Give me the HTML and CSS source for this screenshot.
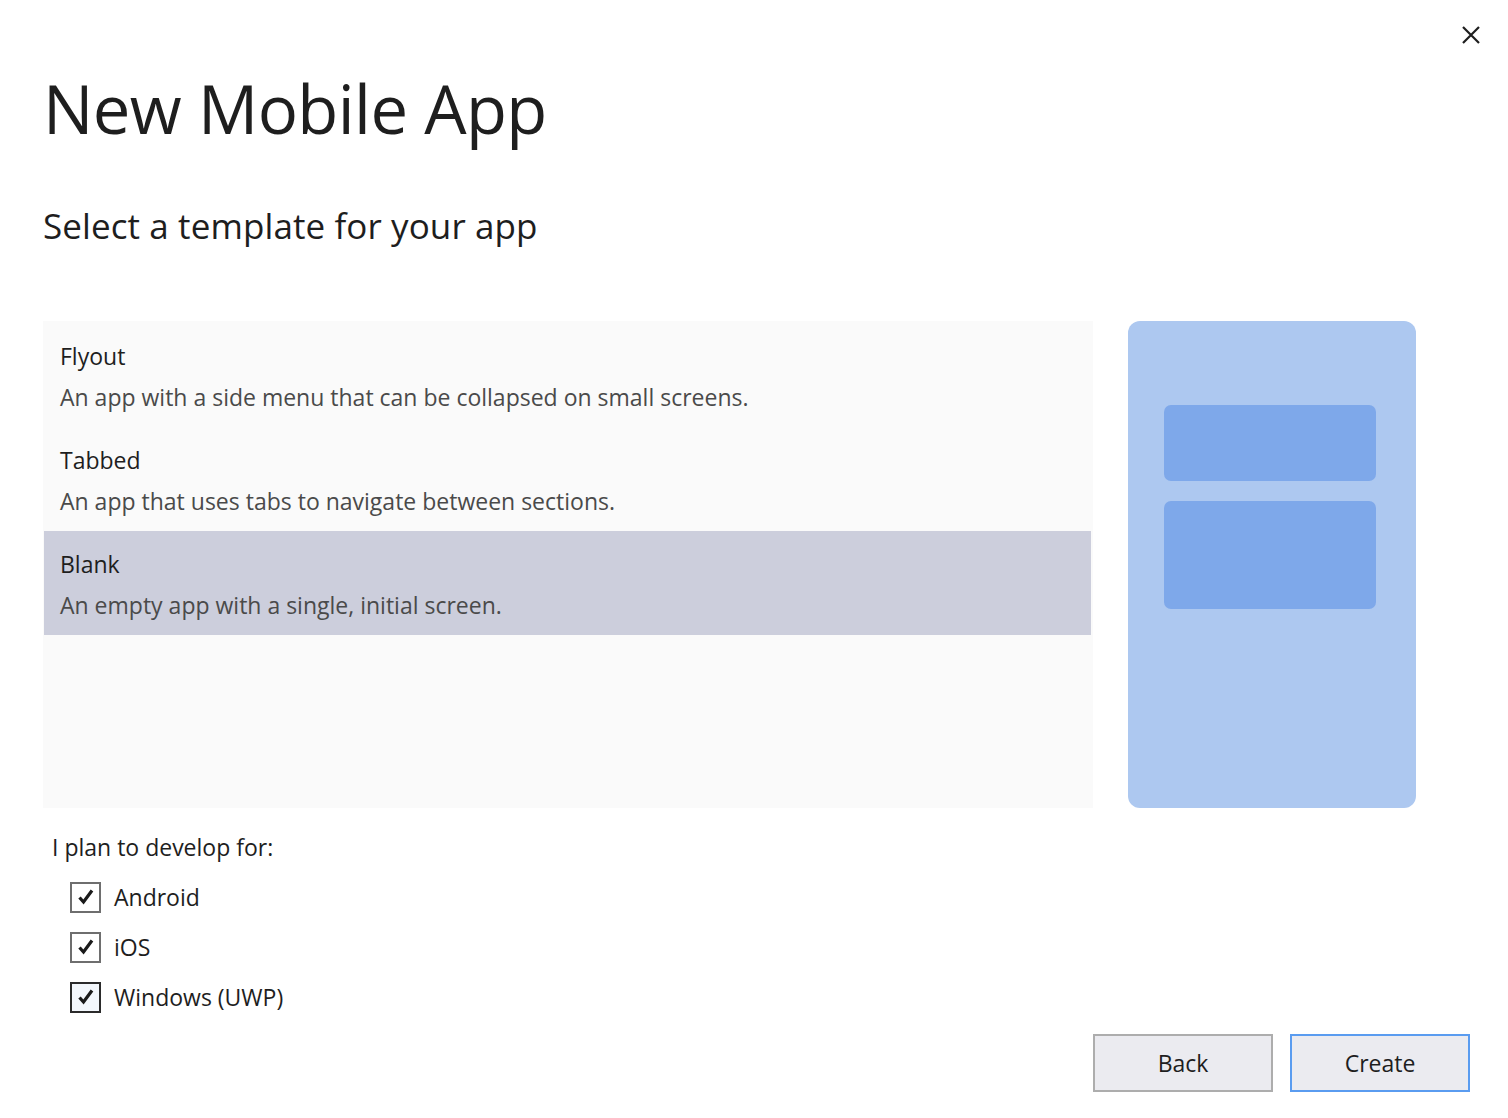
FILE: index.html
```html
<!DOCTYPE html>
<html lang="en">
<head>
    <meta charset="UTF-8">
    <title>New Mobile App</title>
    <link rel="stylesheet" href="styles.css">
</head>
<body>
    <div class="dialog">
        <button class="close" aria-label="Close">
            <svg width="18" height="18" viewBox="0 0 18 18"><path d="M1 1 L17 17 M17 1 L1 17" stroke="#1e1e1e" stroke-width="2.2" fill="none"/></svg>
        </button>
        <h1>New Mobile App</h1>
        <h2>Select a template for your app</h2>

        <div class="main">
            <div class="templates">
                <div class="item">
                    <div class="title">Flyout</div>
                    <div class="desc">An app with a side menu that can be collapsed on small screens.</div>
                </div>
                <div class="item">
                    <div class="title">Tabbed</div>
                    <div class="desc">An app that uses tabs to navigate between sections.</div>
                </div>
                <div class="item selected">
                    <div class="title">Blank</div>
                    <div class="desc">An empty app with a single, initial screen.</div>
                </div>
            </div>
            <div class="preview">
                <div class="block"></div>
                <div class="block tall"></div>
            </div>
        </div>

        <div class="platforms">
            <div class="label">I plan to develop for:</div>
            <label class="check"><span class="box"><svg width="20" height="18" viewBox="0 0 20 18"><path d="M3.5 9.5 L7.5 14 L16 2.5" stroke="#1a1a1a" stroke-width="3.2" fill="none"/></svg></span>Android</label>
            <label class="check"><span class="box"><svg width="20" height="18" viewBox="0 0 20 18"><path d="M3.5 9.5 L7.5 14 L16 2.5" stroke="#1a1a1a" stroke-width="3.2" fill="none"/></svg></span>iOS</label>
            <label class="check focus"><span class="box"><svg width="20" height="18" viewBox="0 0 20 18"><path d="M3.5 9.5 L7.5 14 L16 2.5" stroke="#1a1a1a" stroke-width="3.2" fill="none"/></svg></span>Windows (UWP)</label>
        </div>

        <div class="footer">
            <button class="btn">Back</button>
            <button class="btn primary">Create</button>
        </div>
    </div>
</body>
</html>
```

FILE: styles.css
```css
body{
    margin: 0;
    background-color: #fff;
    font-family: "Open Sans", "Noto Sans", sans-serif;
    color: #1e1e1e;
}
.dialog{
    position: relative;
    width: 1508px;
    height: 1118px;
    padding: 0 0 0 43px;
    box-sizing: border-box;
}
.close{
    position: absolute;
    top: 26px;
    right: 28px;
    width: 18px;
    height: 18px;
    padding: 0;
    border: none;
    background: none;
}
h1{
    margin: 0;
    padding-top: 62px;
    font-size: 67px;
    font-weight: 400;
    line-height: 92px;
    letter-spacing: -0.6px;
}
h2{
    margin: 0;
    padding-top: 47px;
    font-size: 35px;
    font-weight: 400;
    line-height: 50px;
    letter-spacing: 0.1px;
}
.main{
    display: flex;
    margin-top: 70px;
    gap: 35px;
}
.templates{
    width: 1050px;
    height: 487px;
    padding-top: 2px;
    box-sizing: border-box;
    background-color: #fafafa;
}
.item{
    height: 104px;
    padding: 19px 17px 0;
    box-sizing: border-box;
    margin-right: 2px;
}
.item.selected{
    background-color: #cccedc;
    margin-left: 1px;
    padding-left: 16px;
}
.item .title{
    font-size: 23px;
    line-height: 28px;
}
.item .desc{
    margin-top: 13px;
    font-size: 23px;
    line-height: 28px;
    color: #4a4a4a;
}
.preview{
    width: 288px;
    height: 487px;
    background-color: #adc8f0;
    border-radius: 12px;
    padding: 84px 40px 0 36px;
    box-sizing: border-box;
}
.block{
    height: 76px;
    background-color: #7ea8ea;
    border-radius: 7px;
}
.block.tall{
    height: 108px;
    margin-top: 20px;
}
.platforms{
    padding-left: 9px;
    margin-top: 24px;
}
.platforms .label{
    font-size: 23px;
    line-height: 30px;
    margin-bottom: 10px;
}
.check{
    display: flex;
    align-items: center;
    gap: 13px;
    margin-left: 18px;
    height: 50px;
    font-size: 23px;
}
.check .box{
    width: 31px;
    height: 31px;
    box-sizing: border-box;
    border: 2px solid #6e6e6e;
    display: flex;
    justify-content: center;
    align-items: center;
}
.check.focus .box{
    border-color: #2b2b2b;
    background-color: #f3f7fc;
}
.footer{
    position: absolute;
    right: 38px;
    bottom: 26px;
    display: flex;
    gap: 17px;
}
.btn{
    width: 180px;
    height: 58px;
    border: 2px solid #adadad;
    background-color: #ebebf0;
    font-family: inherit;
    font-size: 23px;
    color: #1e1e1e;
}
.btn.primary{
    border-color: #5a9cf0;
}
```
